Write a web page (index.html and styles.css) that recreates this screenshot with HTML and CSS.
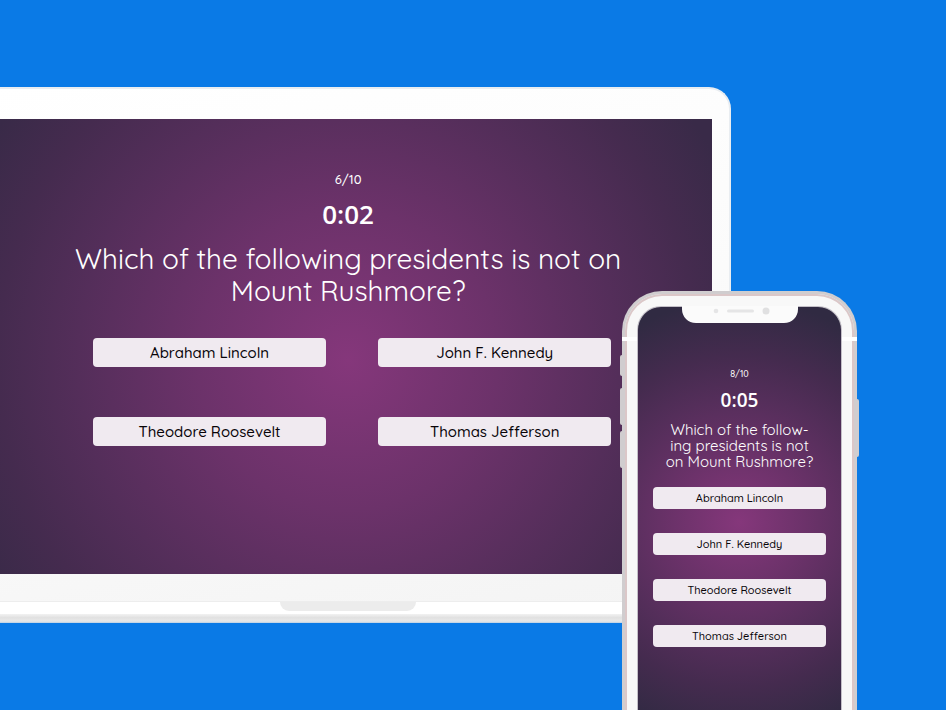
FILE: index.html
```html
<!DOCTYPE html>
<html lang="en">
<head>
<meta charset="utf-8">
<meta name="viewport" content="width=device-width, initial-scale=1">
<title>Presidents Quiz</title>
<link rel="stylesheet" href="styles.css">
</head>
<body>
<main class="stage">
  <section class="laptop">
    <div class="lid">
      <div class="quiz quiz-wide">
        <p class="progress">6/10</p>
        <p class="timer">0:02</p>
        <h1 class="question">Which of the following presidents is not on<br>Mount Rushmore?</h1>
        <div class="answers">
          <button type="button">Abraham Lincoln</button>
          <button type="button">John F. Kennedy</button>
          <button type="button">Theodore Roosevelt</button>
          <button type="button">Thomas Jefferson</button>
        </div>
      </div>
    </div>
    <div class="base"><div class="notch"></div></div>
    <div class="foot"></div>
  </section>

  <section class="phone">
    <span class="key key-mute"></span>
    <span class="key key-up"></span>
    <span class="key key-down"></span>
    <span class="key key-power"></span>
    <div class="frame">
      <div class="quiz quiz-narrow">
        <svg class="camera-bar" viewBox="0 0 116 17" aria-hidden="true">
          <path d="M0 0H116V3C116 11 110 17 102 17H14C6 17 0 11 0 3Z" fill="#fbfbfb"/>
          <circle cx="34" cy="5" r="2.3" fill="#e5e5e6"/>
          <rect x="45" y="3.5" width="27" height="3" rx="1.5" fill="#e5e5e6"/>
          <circle cx="84" cy="5" r="3.5" fill="#e0e0e1"/>
        </svg>
        <p class="progress">8/10</p>
        <p class="timer">0:05</p>
        <h2 class="question">Which of the follow-<br>ing presidents is not<br>on Mount Rushmore?</h2>
        <div class="answers">
          <button type="button">Abraham Lincoln</button>
          <button type="button">John F. Kennedy</button>
          <button type="button">Theodore Roosevelt</button>
          <button type="button">Thomas Jefferson</button>
        </div>
      </div>
    </div>
  </section>
</main>
</body>
</html>
```
FILE: styles.css
```css
* { box-sizing: border-box; }

body {
  margin: 0;
  background: #0a7ae6;
  font-family: Quicksand, Lato, sans-serif;
  color: #fff;
}

p, h1, h2 { margin: 0; font-weight: 400; }

.stage {
  position: relative;
  min-height: 100vh;
  padding-top: 87px;
  overflow: hidden;
}

.laptop { width: 81%; margin-left: -35px; }

.lid {
  padding: 30px 17px 27px;
  border: solid #e9edf1;
  border-width: 2px 2px 0;
  border-radius: 22px 22px 0 0;
  background: linear-gradient(170deg, #fff, #fafafa 60%, #f4f4f4);
}

.quiz {
  display: flex;
  flex-direction: column;
  align-items: center;
  text-align: center;
}

.quiz-wide {
  padding: 50px 105px 128px;
  background: radial-gradient(circle at 50% 53%, #85377b 0, #6c326a 150px, #542e5a 270px, #452b4f 350px, #392a48 420px);
}

.progress, button { font-weight: 500; }

.quiz-wide .progress { font-size: 13px; line-height: 20px; }

.timer { font-family: "Open Sans", sans-serif; font-weight: 600; }

.quiz-wide .timer { margin-top: 5px; font-size: 26px; line-height: 40px; }

.quiz-wide .question {
  margin-top: 9px;
  font-size: 28px;
  line-height: 32px;
  white-space: nowrap;
}

.answers { display: grid; align-self: stretch; }

.quiz-wide .answers {
  grid-template-columns: 1fr 1fr;
  gap: 50px 52px;
  margin: 31px -4px 0 4px;
}

button {
  padding: 0;
  border: 0;
  border-radius: 4px;
  background: #f0eaf0;
  color: #080408;
  font-family: inherit;
}

.quiz-wide button { font-size: 15px; line-height: 29px; }

.base {
  height: 13px;
  margin-right: -20px;
  padding-right: 20px;
  border-top: 1px solid #ededed;
  background: #fff;
}

.notch {
  width: 136px;
  height: 9px;
  margin: 0 auto;
  border-radius: 0 0 10px 10px;
  background: #ececec;
}

.foot {
  height: 9px;
  margin-right: -20px;
  background: linear-gradient(#f2f2f2, #e1e1e1 40%, #e8e8e8 80%, #b9cfe5);
}

.phone {
  position: absolute;
  top: 291px;
  bottom: -4px;
  right: 89px;
  width: 235px;
}

.frame {
  position: relative;
  height: 100%;
  padding: 12px 13px 0;
  border: solid #d0cdcf;
  border-width: 3px 3px 0;
  border-radius: 40px 40px 0 0;
  background: #f8f8f8;
  box-shadow: inset 0 0 0 2px #dbc7c8;
}

.frame::before {
  content: "";
  position: absolute;
  top: 43px;
  left: -3px;
  right: -3px;
  height: 4px;
  background: #fff;
}

.quiz-narrow {
  position: relative;
  height: 100%;
  margin: 0 -1px;
  padding: 0 15px;
  border: solid #c3bfc7;
  border-width: 1px 1px 0;
  border-radius: 24px 24px 0 0;
  background: radial-gradient(circle at 50% 215px, #85377b 0, #6c326a 65px, #542e5a 125px, #452b4f 165px, #302a42 222px);
}

.camera-bar { width: 116px; height: 17px; margin-top: -1px; }

.quiz-narrow .progress { margin-top: 44px; font-size: 9px; line-height: 14px; }
.quiz-narrow .timer { margin-top: 6px; font-size: 19px; line-height: 26px; }
.quiz-narrow .question {
  margin-top: 9px;
  font-size: 15px;
  line-height: 16px;
  white-space: nowrap;
}
.quiz-narrow .answers { gap: 24px; margin-top: 17px; }
.quiz-narrow button { font-size: 11px; line-height: 22px; }

.key {
  position: absolute;
  left: -2px;
  width: 4px;
  border-radius: 2px;
  background: #d0cdcf;
}

.key-mute { top: 64px; height: 21px; }
.key-up { top: 97px; height: 37px; }
.key-down { top: 140px; height: 37px; }
.key-power { top: 108px; left: auto; right: -2px; height: 58px; }
```
